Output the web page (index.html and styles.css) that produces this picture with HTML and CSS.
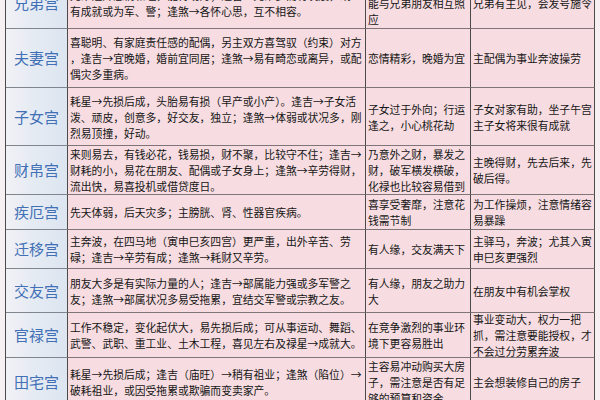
FILE: index.html
```html
<!DOCTYPE html>
<html lang="zh-CN">
<head>
<meta charset="utf-8">
<title>十二宫</title>
<link rel="stylesheet" href="styles.css">
</head>
<body>
<div class="palaces">
  <div class="cell name">兄弟宫</div>
  <div class="cell">兄弟姐妹感情和睦，能得助力；逢吉→兄弟多而有发展，或<br>有成就或为军、警；逢煞→各怀心思，互不相容。</div>
  <div class="cell">兄弟姐妹感情好，<br>能与兄弟朋友相互照<br>应</div>
  <div class="cell">兄弟有主见，会发号施令</div>

  <div class="cell name">夫妻宫</div>
  <div class="cell">喜聪明、有家庭责任感的配偶，另主双方喜驾驭（约束）对方<br>，逢吉→宜晚婚，婚前宜同居；逢煞→易有畸恋或离异，或配<br>偶灾多重病。</div>
  <div class="cell">恋情精彩，晚婚为宜</div>
  <div class="cell">主配偶为事业奔波操劳</div>

  <div class="cell name">子女宫</div>
  <div class="cell">耗星→先损后成，头胎易有损（早产或小产）。逢吉→子女活<br>泼、顽皮，创意多，好交友，独立；逢煞→体弱或状况多，刚<br>烈易顶撞，好动。</div>
  <div class="cell">子女过于外向；行运<br>逢之，小心桃花劫</div>
  <div class="cell">子女对家有助，坐子午宫<br>主子女将来很有成就</div>

  <div class="cell name">财帛宫</div>
  <div class="cell">来则易去，有钱必花，钱易损，财不聚，比较守不住；逢吉→<br>财耗的小，易花在朋友、配偶或子女身上；逢煞→辛劳得财，<br>流出快，易喜投机或借贷度日。</div>
  <div class="cell">乃意外之财，暴发之<br>财，破军横发横破，<br>化禄也比较容易借到</div>
  <div class="cell">主晚得财，先去后来，先<br>破后得。</div>

  <div class="cell name">疾厄宫</div>
  <div class="cell">先天体弱，后天灾多；主膀胱、肾、性器官疾病。</div>
  <div class="cell">喜享受奢靡，注意花<br>钱需节制</div>
  <div class="cell">为工作操烦，注意情绪容<br>易暴躁</div>

  <div class="cell name">迁移宫</div>
  <div class="cell">主奔波，在四马地（寅申巳亥四宫）更严重，出外辛苦、劳<br>碌；逢吉→辛劳有成；逢煞→耗财又辛劳。</div>
  <div class="cell">有人缘，交友满天下</div>
  <div class="cell">主驿马，奔波；尤其入寅<br>申巳亥更强烈</div>

  <div class="cell name">交友宫</div>
  <div class="cell">朋友大多是有实际力量的人；逢吉→部属能力强或多军警之<br>友；逢煞→部属状况多易受拖累，宜结交军警或宗教之友。</div>
  <div class="cell">有人缘，朋友之助力<br>大</div>
  <div class="cell">在朋友中有机会掌权</div>

  <div class="cell name">官禄宫</div>
  <div class="cell">工作不稳定，变化起伏大，易先损后成；可从事运动、舞蹈、<br>武警、武职、重工业、土木工程，喜见左右及禄星→成就大。</div>
  <div class="cell">在竞争激烈的事业环<br>境下更容易胜出</div>
  <div class="cell">事业变动大，权力一把<br>抓，需注意要能授权，才<br>不会过分劳累奔波</div>

  <div class="cell name">田宅宫</div>
  <div class="cell">耗星→先损后成；逢吉（庙旺）→稍有祖业；逢煞（陷位）→<br>破耗祖业，或因受拖累或欺骗而变卖家产。</div>
  <div class="cell">主容易冲动购买大房<br>子，需注意是否有足<br>够的预算和资金</div>
  <div class="cell">主会想装修自己的房子</div>
</div>
</body>
</html>
```

FILE: styles.css
```css
html, body {
  margin: 0;
  height: 100%;
  overflow: hidden;
}

body {
  background: #f6f0f2;
  font-family: "Noto Sans CJK SC", "Noto Sans", sans-serif;
  color: #151515;
}

.palaces {
  display: grid;
  grid-template-columns: 62px 298px 105px 124px;
  grid-template-rows: 51px 59px 58px 49px 35px 39px 44px 45px 49px;
  width: 590px;
  margin: -22px 0 0 5px;
  border-left: 1px solid #4a4a4a;
  box-sizing: border-box;
}

.cell {
  box-sizing: border-box;
  display: flex;
  align-items: center;
  padding: 0 0 0 2px;
  background: #f7dde1;
  border-right: 1px solid #4a4a4a;
  border-bottom: 1px solid #7f7477;
  font-size: 10.8px;
  line-height: 16px;
  white-space: nowrap;
  overflow: hidden;
}

.name {
  justify-content: center;
  padding: 0;
  background: linear-gradient(to right, #f1f1f5 0%, #e5ebf3 45%, #dce5f0 100%);
  border-bottom-color: #80858e;
  color: #4270b6;
  font-size: 15px;
  line-height: 18px;
}
```
